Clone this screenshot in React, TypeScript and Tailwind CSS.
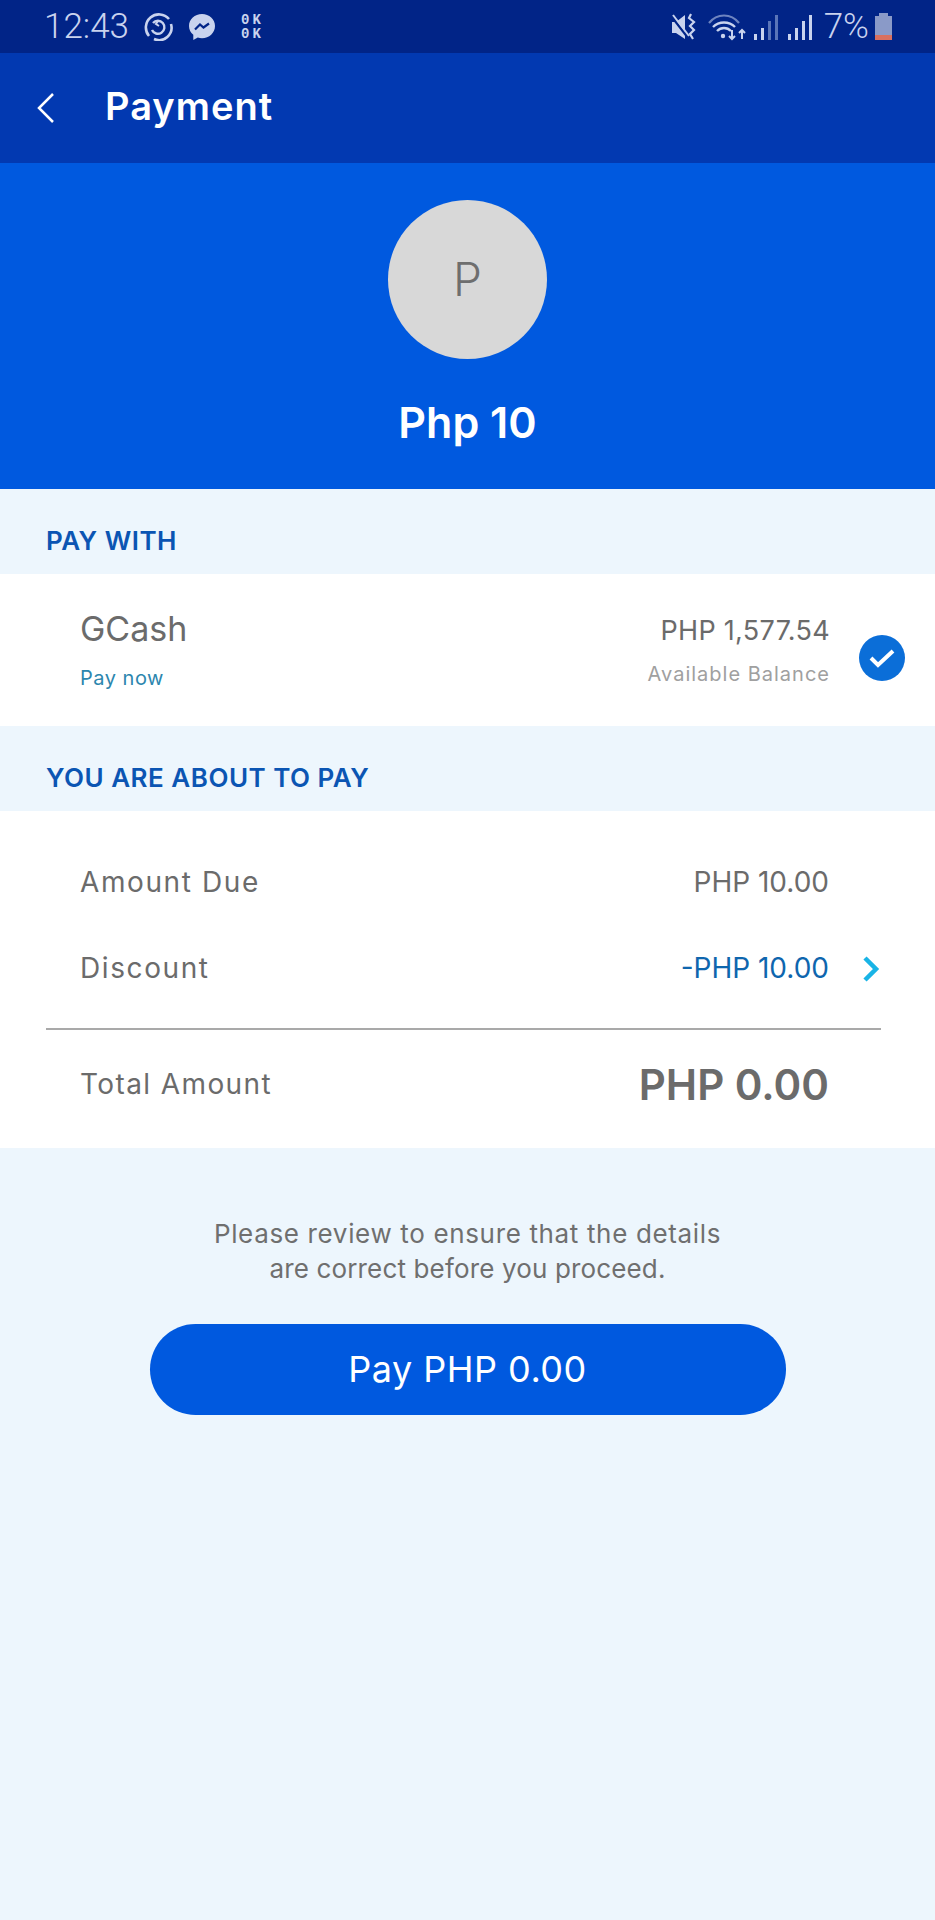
const bodyFont = "font-['Inter','Liberation_Sans',sans-serif]";

function StatusBar() {
  return (
    <div className="h-[53px] bg-[#012487] flex items-center justify-between pl-[44px] pr-[42px] text-[#c9d3ee]">
      <div className="flex items-center">
        <span className="text-[35px] leading-none font-['Roboto',sans-serif] font-light w-[85px]">12:43</span>
        {/* sync icon */}
        <svg className="ml-[15px]" width="29" height="28" viewBox="0 0 29 28" fill="none" stroke="currentColor" strokeWidth="2.6">
          <path d="M5 23A12.500 12.500 0 0 1 25 6" />
          <path d="M27 11a12.500 12.500 0 0 1-17 15" />
          <path d="M9 10a6.500 6.500 0 1 1-1 7" strokeWidth="2.400" />
          <path d="M14 8l-2 3 3 2" strokeWidth="2" />
        </svg>
        {/* messenger icon */}
        <svg className="ml-[15px]" width="28" height="28" viewBox="0 0 28 28">
          <path fill="currentColor" d="M14 1C6.800 1 1 6.300 1 13c0 3.600 1.600 6.600 4.300 8.800V27l4.500-2.400c1.300.4 2.700.6 4.200.6 7.200 0 13-5.400 13-12.200S21.200 1 14 1z" />
          <path fill="none" stroke="#012487" strokeWidth="2.200" d="M7 16.500l5-5 3.500 3 5.500-4" />
        </svg>
        <div className="ml-[25px] w-[24px] text-[14px] leading-[14px] font-bold tracking-[3px] font-['Liberation_Mono',monospace]">
          <div>0K</div>
          <div>0K</div>
        </div>
      </div>
      <div className="flex items-center">
        {/* muted vibrate */}
        <svg width="26" height="28" viewBox="0 0 26 28" fill="currentColor">
          <path d="M1 9h4l9-7v24l-9-6H1z" />
          <path d="M1 4l17 22" stroke="#012487" strokeWidth="2.500" />
          <path d="M2 2l16 21" stroke="currentColor" strokeWidth="2" />
          <path d="M20 1l-2 4 5 4-4 4 4 4-4 4 3 5" fill="none" stroke="currentColor" strokeWidth="2.200" />
        </svg>
        {/* wifi */}
        <svg className="ml-[11px]" width="38" height="28" viewBox="0 0 38 28" fill="none" stroke="currentColor">
          <path d="M1 10c8-10 22-10 30 0" strokeWidth="2.200" opacity="0.55" />
          <path d="M5 14c6-6 16-6 22 0" strokeWidth="2.400" />
          <path d="M9 18c4-4 10-4 14 0" strokeWidth="2.400" />
          <circle cx="15" cy="23" r="2.200" fill="currentColor" stroke="none" />
          <path d="M24 17v9m-3-3l3 3 3-3M34 26v-9m-3 3l3-3 3 3" strokeWidth="2" />
        </svg>
        {/* signal 1 */}
        <svg className="ml-[8px]" width="24" height="28" viewBox="0 0 24 28">
          <rect x="0" y="21" width="3" height="6" fill="currentColor" />
          <rect x="7" y="15" width="3" height="12" fill="currentColor" />
          <rect x="14" y="8" width="3" height="19" fill="#5a75b8" />
          <rect x="21" y="2" width="3" height="25" fill="#5a75b8" />
        </svg>
        {/* signal 2 */}
        <svg className="ml-[10px]" width="24" height="28" viewBox="0 0 24 28" fill="currentColor">
          <rect x="0" y="21" width="3" height="6" />
          <rect x="7" y="15" width="3" height="12" />
          <rect x="14" y="8" width="3" height="19" />
          <rect x="21" y="2" width="3" height="25" />
        </svg>
        <span className="ml-[12px] text-[35px] leading-none font-['Roboto',sans-serif] font-light">7%</span>
        {/* battery */}
        <svg className="ml-[5px]" width="19" height="28" viewBox="0 0 19 28">
          <rect x="5" y="0" width="9" height="3" fill="#8a9ac8" />
          <rect x="1" y="3" width="17" height="19" fill="#8a9ac8" />
          <rect x="1" y="22" width="17" height="5" fill="#d9705f" />
        </svg>
      </div>
    </div>
  );
}

function SectionLabel({ children }: { children: React.ReactNode }) {
  return (
    <div className="h-[85px] flex items-center pl-[46px] pt-[18px] text-[#0b55b3] text-[26px] font-semibold leading-none tracking-[0.5px]">
      {children}
    </div>
  );
}

export default function App() {
  return (
    <div className={`w-[935px] h-[1920px] bg-[#edf6fd] overflow-hidden ${bodyFont}`}>
      <StatusBar />
      <div className="h-[110px] bg-[#0239b1] flex items-center pl-[37px] text-white">
        <svg width="18" height="32" viewBox="0 0 18 32" fill="none" stroke="currentColor" strokeWidth="2.500">
          <path d="M16 2L2 16l14 14" />
        </svg>
        <span className="ml-[50px] mb-[4px] text-[38px] leading-none font-semibold tracking-[1px]">Payment</span>
      </div>

      <div className="h-[326px] bg-[#0059df] flex flex-col items-center pt-[37px]">
        <div className="w-[159px] h-[159px] rounded-full bg-[#d8d8d8] flex items-center justify-center text-[#6e6e6e] text-[46px] font-light">
          P
        </div>
        <div className="mt-[42px] text-white text-[43px] leading-none font-semibold">Php 10</div>
      </div>

      <SectionLabel>PAY WITH</SectionLabel>

      <div className="h-[152px] bg-white flex items-center justify-between pl-[80px] pr-[30px]">
        <div>
          <div className="text-[34px] leading-[40px] text-[#6b6b6b]">GCash</div>
          <div className="mt-[16px] text-[20px] leading-[26px] text-[#2c86ae] tracking-[0.5px]">Pay now</div>
        </div>
        <div className="flex items-center">
          <div className="text-right">
            <div className="text-[27px] leading-[36px] text-[#6b6b6b] tracking-[0.3px]">PHP 1,577.54</div>
            <div className="mt-[12px] text-[20px] leading-[26px] text-[#a0a0a0] tracking-[1px]">Available Balance</div>
          </div>
          <div className="ml-[29px] mt-[16px] w-[46px] h-[46px] rounded-full bg-[#0b6ed8] flex items-center justify-center text-white">
            <svg width="28" height="22" viewBox="0 0 28 22" fill="none" stroke="currentColor" strokeWidth="4">
              <path d="M3 11l7 7L25 4" />
            </svg>
          </div>
        </div>
      </div>

      <SectionLabel>YOU ARE ABOUT TO PAY</SectionLabel>

      <div className="h-[337px] bg-white pt-[28px]">
        <div className="h-[86px] flex items-center justify-between pl-[80px] pr-[106px] text-[28px] text-[#6b6b6b]">
          <span className="tracking-[1.6px]">Amount Due</span>
          <span>PHP 10.00</span>
        </div>
        <div className="h-[86px] flex items-center justify-between pl-[80px] pr-[55px] text-[28px] text-[#6b6b6b]">
          <span className="tracking-[1.6px]">Discount</span>
          <span className="flex items-center text-[#0e66ae]">
            -PHP 10.00
            <svg className="ml-[33px] mt-[2px] text-[#19b4e6]" width="18" height="28" viewBox="0 0 18 28" fill="none" stroke="currentColor" strokeWidth="4.500">
              <path d="M3 3l11 11L3 25" />
            </svg>
          </span>
        </div>
        <div className="ml-[46px] mr-[54px] mt-[17px] h-[2px] bg-[#a9a9a9]" />
        <div className="h-[108px] flex items-center justify-between pl-[80px] pr-[106px] text-[#6b6b6b]">
          <span className="text-[28px] tracking-[1.4px]">Total Amount</span>
          <span className="text-[42px] font-semibold">PHP 0.00</span>
        </div>
      </div>

      <div className="pt-[68px] flex flex-col items-center text-[#6f6f6f] text-[26px] leading-[35px]">
        <div className="tracking-[0.65px]">Please review to ensure that the details</div>
        <div className="tracking-[0.15px]">are correct before you proceed.</div>
        <div className="mt-[38px] w-[636px] h-[91px] rounded-full bg-[#0059df] flex items-center justify-center text-white text-[36px] tracking-[0.5px]">
          Pay PHP 0.00
        </div>
      </div>
    </div>
  );
}
